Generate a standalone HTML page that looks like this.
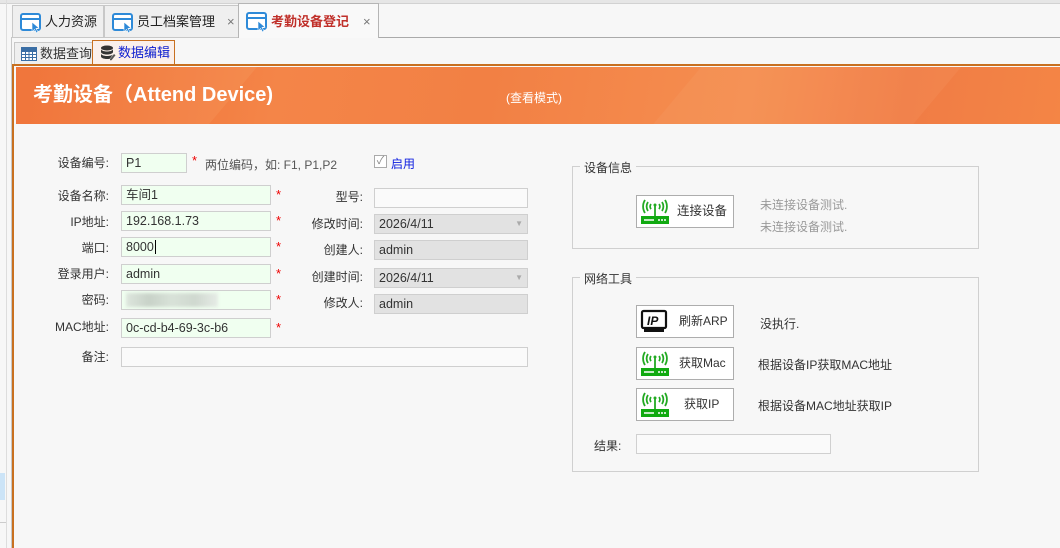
<!DOCTYPE html>
<html><head><meta charset="utf-8"><style>
*{margin:0;padding:0;box-sizing:border-box}
body{width:1060px;height:548px;overflow:hidden;background:#f7f7f7;font-family:"Liberation Sans","Noto Sans CJK SC",sans-serif;font-size:12px;color:#333;position:relative;white-space:nowrap}
.a{position:absolute}
.tab{position:absolute;top:5px;height:33px;border:1px solid #c8c8c8;border-bottom:none;background:#efefef;font-size:13px;line-height:32px;color:#222}
.tab svg{position:absolute;left:7px;top:6px}
.tab .t{position:absolute;left:32px}
.x{position:absolute;color:#777;font-size:13px}
.lbl{position:absolute;text-align:right;width:100px;line-height:20px}
.in{position:absolute;height:20px;border:1px solid #cfcfcf;background:#f0fff0;line-height:18px;padding-left:4px;font-size:12.5px}
.ro{background:#e2e2e2}
.wh{background:#fafafa}
.st{position:absolute;color:#e00;font-size:13px}
.grp{position:absolute;border:1px solid #d0d0d0}
.leg{position:absolute;background:#f7f7f7;padding:0 4px;line-height:14px}
.btn{position:absolute;width:98px;height:33px;border:1px solid #adadad;background:#fff;line-height:31px}
.btn svg{position:absolute;left:3px;top:3px}
.btn span{position:absolute}
</style></head><body>
<div class="a" style="left:0;top:0;width:1060px;height:3px;background:#e6e6e6"></div>
<div class="a" style="left:0;top:3px;width:1060px;height:1px;background:#d2d2d2"></div>
<!-- top tabs -->
<div class="tab" style="left:12px;width:92px"><svg width="22" height="22" viewBox="0 0 22 22"><rect x="1" y="2" width="19" height="16" rx="2" fill="#fff" stroke="#2e8ad8" stroke-width="2"/><line x1="1" y1="7" x2="20" y2="7" stroke="#2e8ad8" stroke-width="2"/><path d="M12 10 L12 20 L14.5 17.5 L16.5 21 L18 20 L16 16.5 L19 16 Z" fill="#2e8ad8" stroke="#fff" stroke-width=".6"/></svg><span class="t">人力资源</span></div>
<div class="tab" style="left:104px;width:135px"><svg width="22" height="22" viewBox="0 0 22 22"><rect x="1" y="2" width="19" height="16" rx="2" fill="#fff" stroke="#2e8ad8" stroke-width="2"/><line x1="1" y1="7" x2="20" y2="7" stroke="#2e8ad8" stroke-width="2"/><path d="M12 10 L12 20 L14.5 17.5 L16.5 21 L18 20 L16 16.5 L19 16 Z" fill="#2e8ad8" stroke="#fff" stroke-width=".6"/></svg><span class="t">员工档案管理</span><span class="x" style="left:122px">×</span></div>
<div class="tab" style="left:238px;width:141px;top:3px;height:35px;background:#f9f9f9;border-color:#b5b5b5"><svg width="22" height="22" viewBox="0 0 22 22" style="top:7px"><rect x="1" y="2" width="19" height="16" rx="2" fill="#fff" stroke="#2e8ad8" stroke-width="2"/><line x1="1" y1="7" x2="20" y2="7" stroke="#2e8ad8" stroke-width="2"/><path d="M12 10 L12 20 L14.5 17.5 L16.5 21 L18 20 L16 16.5 L19 16 Z" fill="#2e8ad8" stroke="#fff" stroke-width=".6"/></svg><span class="t" style="color:#c0302a;font-weight:bold;line-height:36px">考勤设备登记</span><span class="x" style="left:124px;line-height:36px">×</span></div>
<div class="a" style="left:379px;top:37px;width:681px;height:1px;background:#aaa"></div>
<div class="a" style="left:11px;top:37px;width:227px;height:1px;background:#c8c8c8"></div>
<!-- left strip -->
<div class="a" style="left:6px;top:0;width:1px;height:548px;background:#ddd"></div>
<div class="a" style="left:0;top:473px;width:5px;height:27px;background:#cce4f7"></div>
<div class="a" style="left:0;top:522px;width:6px;height:1px;background:#ccc"></div>
<div class="a" style="left:11px;top:37px;width:1px;height:511px;background:#c8c8c8"></div>
<!-- inner tabs -->
<div class="a" style="left:14px;top:42px;width:79px;height:23px;border:1px solid #c8c8c8;border-bottom:none;background:#efefef;font-size:13px;line-height:22px;padding-left:25px;white-space:nowrap;overflow:hidden">数据查询
<svg class="a" style="left:6px;top:4px" width="16" height="14" viewBox="0 0 16 14"><rect x=".5" y=".5" width="15" height="13" fill="#fff" stroke="#3a6ea5"/><path d="M0 4.5H16M0 7.5H16M0 10.5H16M4.5 0V14M8 0V14M11.5 0V14" stroke="#3a6ea5"/><rect x=".5" y=".5" width="15" height="3.5" fill="#3a6ea5"/></svg></div>
<div class="a" style="left:92px;top:40px;width:83px;height:25px;border:1px solid #c87020;border-bottom:none;background:#fbf0eb;font-size:13px;line-height:24px;padding-left:25px;color:#1020d0">数据编辑
<svg class="a" style="left:7px;top:4px" width="16" height="16" viewBox="0 0 16 16"><ellipse cx="7" cy="3" rx="6" ry="2.5" fill="#333"/><path d="M1 4v3c0 1.4 2.7 2.5 6 2.5s6-1.1 6-2.5V4c0 1.4-2.7 2.5-6 2.5S1 5.4 1 4z" fill="#333"/><path d="M1 8.5v3c0 1.4 2.7 2.5 6 2.5 1 0 2-.1 2.8-.3L13 9.5c-1 .9-3.3 1.5-6 1.5-3.3 0-6-1.1-6-2.5z" fill="#333"/><path d="M10 14l4-5 1.5 1.2-4 5H10z" fill="#555"/></svg></div>
<div class="a" style="left:13px;top:64px;width:1047px;height:2px;background:#c87020"></div>
<div class="a" style="left:12px;top:64px;width:2px;height:484px;background:#c87020"></div>
<!-- banner -->
<div class="a" style="left:16px;top:67px;width:1044px;height:57px;background:linear-gradient(100deg,#ee6a30 0%,#f48548 25%,#f28044 45%,#f58e50 70%,#f07c45 85%,#f48545 100%);overflow:hidden">
<div class="a" style="left:-40px;top:-40px;width:260px;height:130px;background:rgba(255,200,140,.12);transform:skewX(-40deg)"></div>
<div class="a" style="left:660px;top:0;width:260px;height:60px;background:rgba(255,210,160,.08);transform:skewX(-40deg)"></div>
<div class="a" style="left:17px;top:16px;color:#fff;font-weight:bold;font-size:20px;line-height:24px">考勤设备（Attend Device)</div>
<div class="a" style="left:490px;top:22px;color:#fff;font-size:12px">(查看模式)</div>
</div>
<!-- form left -->
<div class="lbl" style="left:9px;top:153px">设备编号:</div>
<div class="in" style="left:121px;top:153px;width:66px">P1</div>
<div class="st" style="left:192px;top:153px">*</div>
<div class="a" style="left:205px;top:156px;color:#555">两位编码，如: F1, P1,P2</div>
<div class="a" style="left:374px;top:155px;width:13px;height:13px;border:1px solid #aaa;background:#fff;color:#888;font-size:11px;line-height:11px;text-align:center">✓</div>
<div class="a" style="left:391px;top:155px;color:#1020e0">启用</div>

<div class="lbl" style="left:9px;top:186px">设备名称:</div><div class="in" style="left:121px;top:185px;width:150px">车间1</div><div class="st" style="left:276px;top:187px">*</div>
<div class="lbl" style="left:9px;top:212px">IP地址:</div><div class="in" style="left:121px;top:211px;width:150px">192.168.1.73</div><div class="st" style="left:276px;top:213px">*</div>
<div class="lbl" style="left:9px;top:238px">端口:</div><div class="in" style="left:121px;top:237px;width:150px">8000<span style="border-left:1px solid #000;margin-left:1px"></span></div><div class="st" style="left:276px;top:239px">*</div>
<div class="lbl" style="left:9px;top:264px">登录用户:</div><div class="in" style="left:121px;top:264px;width:150px">admin</div><div class="st" style="left:276px;top:266px">*</div>
<div class="lbl" style="left:9px;top:290px">密码:</div><div class="in" style="left:121px;top:290px;width:150px"><div class="a" style="left:4px;top:2px;width:92px;height:14px;background:linear-gradient(90deg,#dde6dd,#c8d2c8,#d8e2d8,#cfd8cf,#e6ece6);filter:blur(1.5px)"></div></div><div class="st" style="left:276px;top:292px">*</div>
<div class="lbl" style="left:9px;top:317px">MAC地址:</div><div class="in" style="left:121px;top:318px;width:150px">0c-cd-b4-69-3c-b6</div><div class="st" style="left:276px;top:320px">*</div>
<div class="lbl" style="left:9px;top:347px">备注:</div><div class="in wh" style="left:121px;top:347px;width:407px"></div>
<!-- form right -->
<div class="lbl" style="left:263px;top:187px">型号:</div><div class="in wh" style="left:374px;top:188px;width:154px"></div>
<div class="lbl" style="left:263px;top:214px">修改时间:</div><div class="in ro" style="left:374px;top:214px;width:154px">2026/4/11<span class="a" style="right:4px;top:0;color:#aaa;font-size:8px">▼</span></div>
<div class="lbl" style="left:263px;top:240px">创建人:</div><div class="in ro" style="left:374px;top:240px;width:154px">admin</div>
<div class="lbl" style="left:263px;top:267px">创建时间:</div><div class="in ro" style="left:374px;top:268px;width:154px">2026/4/11<span class="a" style="right:4px;top:0;color:#aaa;font-size:8px">▼</span></div>
<div class="lbl" style="left:263px;top:293px">修改人:</div><div class="in ro" style="left:374px;top:294px;width:154px">admin</div>
<!-- groups -->
<div class="grp" style="left:572px;top:166px;width:407px;height:83px"></div>
<div class="leg" style="left:580px;top:161px">设备信息</div>
<div class="btn" style="left:636px;top:195px"><svg width="30" height="26" viewBox="0 0 30 26"><g fill="none" stroke="#22aa22" stroke-width="1.8"><path d="M8 3a8 8 0 0 0 0 9M5 1a12 12 0 0 0 0 13M22 3a8 8 0 0 1 0 9M25 1a12 12 0 0 1 0 13M11 5a4 4 0 0 0 0 5M19 5a4 4 0 0 1 0 5"/><path d="M15 6v11"/></g><circle cx="15" cy="6" r="1.5" fill="#22aa22"/><rect x="1" y="17" width="28" height="8" fill="#11aa11"/><path d="M4 21h10" stroke="#fff" stroke-width="1.5"/><circle cx="19" cy="21" r="1" fill="#fff"/><circle cx="22" cy="21" r="1" fill="#fff"/><circle cx="25" cy="21" r="1" fill="#fff"/></svg><span style="left:40px;font-size:12.5px">连接设备</span></div>
<div class="a" style="left:760px;top:196px;color:#999">未连接设备测试.</div>
<div class="a" style="left:760px;top:218px;color:#999">未连接设备测试.</div>

<div class="grp" style="left:572px;top:277px;width:407px;height:195px"></div>
<div class="leg" style="left:580px;top:272px">网络工具</div>
<div class="btn" style="left:636px;top:305px"><svg width="30" height="26" viewBox="0 0 30 26"><rect x="2" y="2" width="24" height="17" rx="1.5" fill="#fff" stroke="#111" stroke-width="2.2"/><rect x="4" y="20" width="20" height="3" fill="#111"/><text x="7" y="16" font-family="Liberation Sans" font-weight="bold" font-style="italic" font-size="12" fill="#111">IP</text></svg><span style="left:42px">刷新ARP</span></div>
<div class="a" style="left:760px;top:315px">没执行.</div>
<div class="btn" style="left:636px;top:347px"><svg width="30" height="26" viewBox="0 0 30 26"><g fill="none" stroke="#22aa22" stroke-width="1.8"><path d="M8 3a8 8 0 0 0 0 9M5 1a12 12 0 0 0 0 13M22 3a8 8 0 0 1 0 9M25 1a12 12 0 0 1 0 13M11 5a4 4 0 0 0 0 5M19 5a4 4 0 0 1 0 5"/><path d="M15 6v11"/></g><circle cx="15" cy="6" r="1.5" fill="#22aa22"/><rect x="1" y="17" width="28" height="8" fill="#11aa11"/><path d="M4 21h10" stroke="#fff" stroke-width="1.5"/><circle cx="19" cy="21" r="1" fill="#fff"/><circle cx="22" cy="21" r="1" fill="#fff"/><circle cx="25" cy="21" r="1" fill="#fff"/></svg><span style="left:42px">获取Mac</span></div>
<div class="a" style="left:758px;top:356px">根据设备IP获取MAC地址</div>
<div class="btn" style="left:636px;top:388px"><svg width="30" height="26" viewBox="0 0 30 26"><g fill="none" stroke="#22aa22" stroke-width="1.8"><path d="M8 3a8 8 0 0 0 0 9M5 1a12 12 0 0 0 0 13M22 3a8 8 0 0 1 0 9M25 1a12 12 0 0 1 0 13M11 5a4 4 0 0 0 0 5M19 5a4 4 0 0 1 0 5"/><path d="M15 6v11"/></g><circle cx="15" cy="6" r="1.5" fill="#22aa22"/><rect x="1" y="17" width="28" height="8" fill="#11aa11"/><path d="M4 21h10" stroke="#fff" stroke-width="1.5"/><circle cx="19" cy="21" r="1" fill="#fff"/><circle cx="22" cy="21" r="1" fill="#fff"/><circle cx="25" cy="21" r="1" fill="#fff"/></svg><span style="left:47px">获取IP</span></div>
<div class="a" style="left:758px;top:397px">根据设备MAC地址获取IP</div>
<div class="a" style="left:594px;top:437px">结果:</div>
<div class="in wh" style="left:636px;top:434px;width:195px;border-color:#d0d0d0"></div>
</body></html>
